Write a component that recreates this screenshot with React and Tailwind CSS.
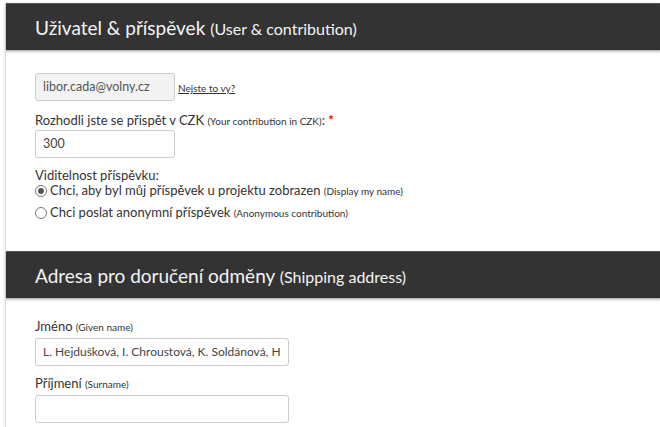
import React from 'react';

const SectionHeader = ({ title, sub }) => (
    <div className="h-[48px] flex items-center pl-[29px] bg-[#333333] border-t border-[#555] border-b border-b-[#bbb] shadow-[0_1px_2px_rgba(0,0,0,0.25)]">
        <h2 className="text-[#f4f4f4] text-[19px] leading-none">
            {title} <span className="text-[16px]">{sub}</span>
        </h2>
    </div>
);

const Radio = ({ checked }) => (
    <span className="w-[12px] h-[12px] rounded-full border border-[#777] bg-white flex items-center justify-center mr-[3px]">
        {checked && <span className="w-[6px] h-[6px] rounded-full bg-[#555]" />}
    </span>
);

const App = () => {
    return (
        <div className="w-[660px] h-[427px] overflow-hidden bg-white pt-[3px] pl-[5px] text-[#333]" style={{ fontFamily: 'Lato, "Liberation Sans", sans-serif' }}>
            <div className="border-l border-[#ddd] shadow-[-1px_0_2px_rgba(0,0,0,0.08)] h-full">
                <SectionHeader title="Uživatel & příspěvek" sub="(User & contribution)" />

                <div className="pl-[29px] pt-[22px] h-[200px]">
                    <div className="flex items-center gap-[3px]">
                        <div className="w-[140px] h-[28px] rounded-[3px] border border-[#ccc] bg-[#f3f3f3] flex items-center px-[7px] text-[12.5px] text-[#555]">
                            libor.cada@volny.cz
                        </div>
                        <a className="text-[10px] underline text-[#333] mt-[3px]">Nejste to vy?</a>
                    </div>

                    <div className="mt-[11px] text-[13px] leading-[17px]">
                        Rozhodli jste se přispět v CZK <span className="text-[10px]">(Your contribution in CZK)</span>: <span className="text-[#d00] font-bold">*</span>
                    </div>
                    <div className="w-[140px] h-[28px] rounded-[3px] border border-[#ccc] bg-white flex items-center px-[7px] text-[12.5px] text-[#444]">
                        300
                    </div>

                    <div className="mt-[9px] text-[13px] leading-[16px]">Viditelnost příspěvku:</div>
                    <div className="flex items-center text-[13px] leading-[15px]">
                        <Radio checked />
                        <span>Chci, aby byl můj příspěvek u projektu zobrazen <span className="text-[10px]">(Display my name)</span></span>
                    </div>
                    <div className="flex items-center text-[13px] leading-[20px] mt-[3px]">
                        <Radio />
                        <span>Chci poslat anonymní příspěvek <span className="text-[10px]">(Anonymous contribution)</span></span>
                    </div>
                </div>

                <SectionHeader title="Adresa pro doručení odměny" sub="(Shipping address)" />

                <div className="pl-[29px] pt-[19px]">
                    <div className="text-[13px] leading-[17px]">Jméno <span className="text-[10px]">(Given name)</span></div>
                    <div className="mt-[2px] w-[254px] h-[28px] rounded-[3px] border border-[#ccc] bg-white flex items-center px-[7px] text-[12px] text-[#444] whitespace-nowrap overflow-hidden">
                        L. Hejdušková, I. Chroustová, K. Soldánová, H
                    </div>
                    <div className="mt-[9px] text-[13px] leading-[17px]">Příjmení <span className="text-[10px]">(Surname)</span></div>
                    <div className="mt-[2px] w-[254px] h-[28px] rounded-[3px] border border-[#ccc] bg-white" />
                </div>
            </div>
        </div>
    );
};

export default App;
